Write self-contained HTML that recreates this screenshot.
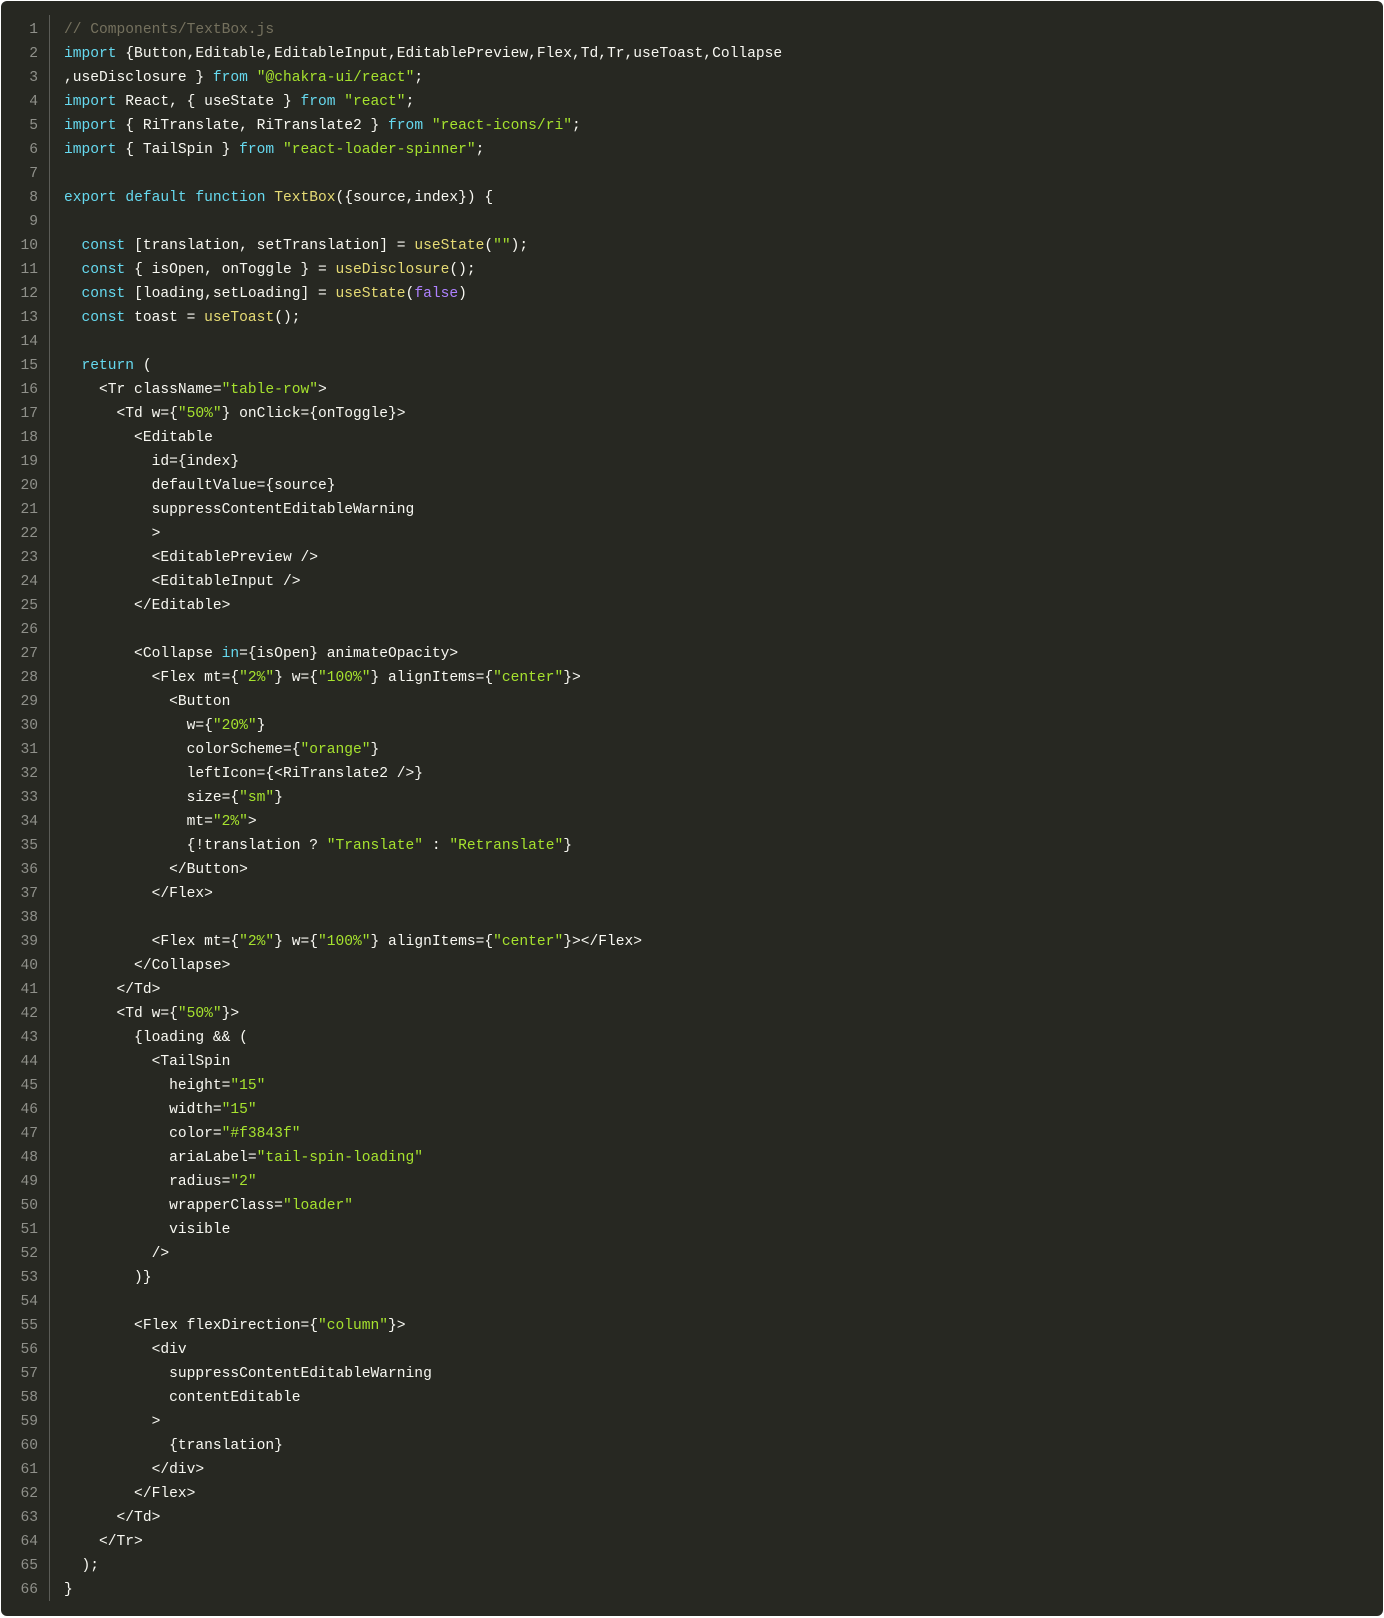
<!DOCTYPE html>
<html><head><meta charset="utf-8"><style>
html,body{margin:0;padding:0;background:#fff;width:1384px;height:1618px;overflow:hidden}
.box{position:absolute;left:1px;top:1px;width:1382px;height:1615px;background:#272822;border-radius:6px}
.gut{position:absolute;left:0;top:17px;width:37px;text-align:right;color:#8f908a}
.line{position:absolute;left:48px;top:14px;width:1px;height:1586px;background:#5b5c57}
pre,.gut{font-family:"Liberation Mono",monospace;font-size:14.6px;line-height:24px;margin:0}
pre{position:absolute;left:63px;top:17px;color:#f8f8f2}
.k{color:#66d9ef}.s{color:#a6e22e}.f{color:#e6db74}.c{color:#75715e}.n{color:#ae81ff}
</style></head><body><div class="box">
<div class="gut">1<br>2<br>3<br>4<br>5<br>6<br>7<br>8<br>9<br>10<br>11<br>12<br>13<br>14<br>15<br>16<br>17<br>18<br>19<br>20<br>21<br>22<br>23<br>24<br>25<br>26<br>27<br>28<br>29<br>30<br>31<br>32<br>33<br>34<br>35<br>36<br>37<br>38<br>39<br>40<br>41<br>42<br>43<br>44<br>45<br>46<br>47<br>48<br>49<br>50<br>51<br>52<br>53<br>54<br>55<br>56<br>57<br>58<br>59<br>60<br>61<br>62<br>63<br>64<br>65<br>66</div>
<div class="line"></div>
<pre><span class="c">// Components/TextBox.js</span>
<span class="k">import</span> {Button,Editable,EditableInput,EditablePreview,Flex,Td,Tr,useToast,Collapse
,useDisclosure } <span class="k">from</span> <span class="s">"@chakra-ui/react"</span>;
<span class="k">import</span> React, { useState } <span class="k">from</span> <span class="s">"react"</span>;
<span class="k">import</span> { RiTranslate, RiTranslate2 } <span class="k">from</span> <span class="s">"react-icons/ri"</span>;
<span class="k">import</span> { TailSpin } <span class="k">from</span> <span class="s">"react-loader-spinner"</span>;

<span class="k">export</span> <span class="k">default</span> <span class="k">function</span> <span class="f">TextBox</span>({source,index}) {

  <span class="k">const</span> [translation, setTranslation] = <span class="f">useState</span>(<span class="s">""</span>);
  <span class="k">const</span> { isOpen, onToggle } = <span class="f">useDisclosure</span>();
  <span class="k">const</span> [loading,setLoading] = <span class="f">useState</span>(<span class="n">false</span>)
  <span class="k">const</span> toast = <span class="f">useToast</span>();

  <span class="k">return</span> (
    &lt;Tr className=<span class="s">"table-row"</span>&gt;
      &lt;Td w={<span class="s">"50%"</span>} onClick={onToggle}&gt;
        &lt;Editable
          id={index}
          defaultValue={source}
          suppressContentEditableWarning
          &gt;
          &lt;EditablePreview /&gt;
          &lt;EditableInput /&gt;
        &lt;/Editable&gt;

        &lt;Collapse <span class="k">in</span>={isOpen} animateOpacity&gt;
          &lt;Flex mt={<span class="s">"2%"</span>} w={<span class="s">"100%"</span>} alignItems={<span class="s">"center"</span>}&gt;
            &lt;Button
              w={<span class="s">"20%"</span>}
              colorScheme={<span class="s">"orange"</span>}
              leftIcon={&lt;RiTranslate2 /&gt;}
              size={<span class="s">"sm"</span>}
              mt=<span class="s">"2%"</span>&gt;
              {!translation ? <span class="s">"Translate"</span> : <span class="s">"Retranslate"</span>}
            &lt;/Button&gt;
          &lt;/Flex&gt;

          &lt;Flex mt={<span class="s">"2%"</span>} w={<span class="s">"100%"</span>} alignItems={<span class="s">"center"</span>}&gt;&lt;/Flex&gt;
        &lt;/Collapse&gt;
      &lt;/Td&gt;
      &lt;Td w={<span class="s">"50%"</span>}&gt;
        {loading &amp;&amp; (
          &lt;TailSpin
            height=<span class="s">"15"</span>
            width=<span class="s">"15"</span>
            color=<span class="s">"#f3843f"</span>
            ariaLabel=<span class="s">"tail-spin-loading"</span>
            radius=<span class="s">"2"</span>
            wrapperClass=<span class="s">"loader"</span>
            visible
          /&gt;
        )}

        &lt;Flex flexDirection={<span class="s">"column"</span>}&gt;
          &lt;div
            suppressContentEditableWarning
            contentEditable
          &gt;
            {translation}
          &lt;/div&gt;
        &lt;/Flex&gt;
      &lt;/Td&gt;
    &lt;/Tr&gt;
  );
}</pre>
</div></body></html>
